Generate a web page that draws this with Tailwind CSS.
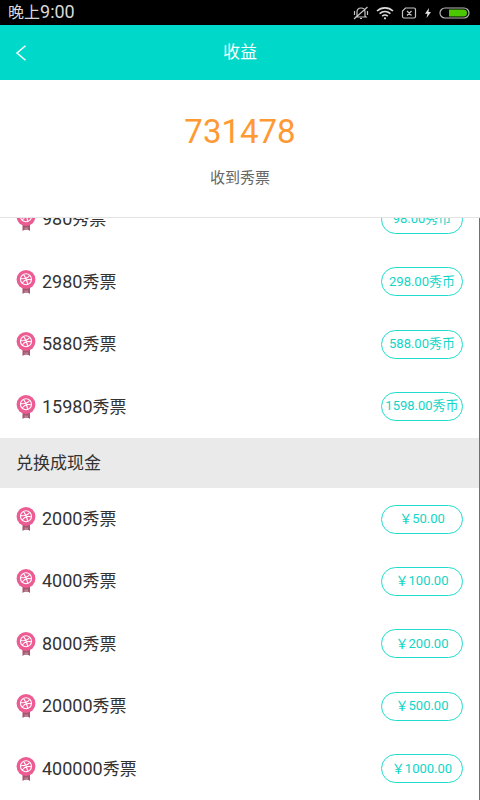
<!DOCTYPE html>
<html lang="zh-CN">
<head>
<meta charset="utf-8">
<meta name="viewport" content="width=device-width, initial-scale=1">
<title>收益</title>
<script src="https://cdn.jsdelivr.net/npm/@tailwindcss/browser@4"></script>
</head>
<body class="flex h-screen flex-col overflow-hidden bg-white font-[Roboto,'Noto_Sans_CJK_SC',sans-serif] text-lg text-[#333333]">
<svg class="hidden" aria-hidden="true">
  <symbol id="badge" viewBox="0 0 20 24">
    <path d="M6.500 16h7.500v8l-1.500-1h-4.500l-1.500 1z" fill="#a65770"/>
    <path d="M8.500 20.500h3.500v2.500h-3.500z" fill="#b98593"/>
    <circle cx="10" cy="9.500" r="9.400" fill="#ec5c93"/>
    <g fill="none" stroke="#fff" stroke-width="1.100">
      <circle cx="10" cy="9.300" r="5.500"/>
      <path d="M7.500 4.400c2.500 3 3.700 6.300 4.300 10M4.600 8.800c4 .2 7.300-.8 9.300-3.600M6.200 13.400c1.800-3.500 5.100-4.500 9.200-3.600"/>
    </g>
  </symbol>
</svg>

<div class="flex h-[25px] shrink-0 items-center justify-between bg-black pr-[10px] pl-2 leading-6 text-[#d8d8d8]">
  <span><span class="text-base">晚上</span>9:00</span>
  <div class="flex items-center gap-[7px]">
    <svg class="h-[14px] w-4" viewBox="0 0 16 14" fill="none" stroke="#c4c4c4" stroke-width="1.200">
      <path d="M4 10V6c0-2.500 1.500-4 4-4s4 1.500 4 4v4l1 1H3zM7 12.500h2M1 13 14.500 1M1.500 5v4M14.500 5v4"/>
    </svg>
    <svg class="h-[14px] w-[18px]" viewBox="0 0 18 14" fill="none" stroke="#dedede" stroke-width="1.600">
      <path d="M1 5c4.600-4.200 11.400-4.200 16 0M3.600 7.700c3.200-2.800 7.600-2.800 10.800 0M6.200 10.200c1.700-1.400 3.900-1.400 5.600 0"/><circle cx="9" cy="12.300" r="1.100" fill="#dedede" stroke="none"/>
    </svg>
    <svg class="h-[14px] w-4" viewBox="0 0 16 14" fill="none" stroke="#c4c4c4" stroke-width="1.200">
      <path d="M4.500 2H13c1 0 1.500.5 1.500 1.500v7c0 1-.5 1.500-1.500 1.500H3c-1 0-1.500-.5-1.500-1.500V5zM6 5l4.500 4.500M10.500 5 6 9.500"/>
    </svg>
    <svg class="h-[14px] w-2" viewBox="0 0 8 14" fill="#e4e4e4"><path d="M5 2 1 7.800h2.500L2.500 12 7 6H4.500z"/></svg>
    <svg class="h-[14px] w-[31px]" viewBox="0 0 31 14"><rect x="1" y="2" width="29" height="10" rx="5" fill="none" stroke="#b8b8b8" stroke-width="1.200"/><path d="M10 3.500h14.500a3.500 3.500 0 0 1 0 7H10z" fill="#4cc800"/></svg>
  </div>
</div>

<header class="grid h-[55px] shrink-0 grid-cols-[1fr_auto_1fr] items-center bg-[#00d9c9] px-[11px] text-white">
  <button type="button" aria-label="返回" class="flex size-5 items-center justify-center">
    <svg class="h-4 w-3" viewBox="0 0 12 16" fill="none" stroke="#fff" stroke-width="1.500"><path d="M10.500.8 2 8l8.500 7.200"/></svg>
  </button>
  <h1 class="text-[17px]">收益</h1>
</header>

<section class="flex h-[138px] shrink-0 flex-col items-center border-b border-[#e4e4e4] pt-8 text-center">
  <p class="text-[33px] leading-10 text-[#ff9933]">731478</p>
  <h2 class="mt-4 text-[15px] leading-5 text-[#666666]">收到秀票</h2>
</section>

<main class="flex min-h-0 flex-1 flex-col overflow-hidden border-r border-[#707070]">
  <ul class="-mt-[30px] flex flex-[4_0_auto] flex-col">
    <li class="flex min-h-[62px] flex-1 items-center pr-4 pl-4"><svg class="h-6 w-5" aria-hidden="true"><use href="#badge"/></svg><span class="ml-[6px] flex-1">980<span class="text-[17px]">秀票</span></span><button type="button" class="h-[29px] w-[82px] rounded-full border border-[#1fdccd] text-[13px] whitespace-nowrap text-[#10d6c7]">98.00秀币</button></li>
    <li class="flex min-h-[62px] flex-1 items-center pr-4 pl-4"><svg class="h-6 w-5" aria-hidden="true"><use href="#badge"/></svg><span class="ml-[6px] flex-1">2980<span class="text-[17px]">秀票</span></span><button type="button" class="h-[29px] w-[82px] rounded-full border border-[#1fdccd] text-[13px] whitespace-nowrap text-[#10d6c7]">298.00秀币</button></li>
    <li class="flex min-h-[62px] flex-1 items-center pr-4 pl-4"><svg class="h-6 w-5" aria-hidden="true"><use href="#badge"/></svg><span class="ml-[6px] flex-1">5880<span class="text-[17px]">秀票</span></span><button type="button" class="h-[29px] w-[82px] rounded-full border border-[#1fdccd] text-[13px] whitespace-nowrap text-[#10d6c7]">588.00秀币</button></li>
    <li class="flex min-h-[62px] flex-1 items-center pr-4 pl-4"><svg class="h-6 w-5" aria-hidden="true"><use href="#badge"/></svg><span class="ml-[6px] flex-1">15980<span class="text-[17px]">秀票</span></span><button type="button" class="h-[29px] w-[82px] rounded-full border border-[#1fdccd] text-[13px] whitespace-nowrap text-[#10d6c7]">1598.00秀币</button></li>
  </ul>
  <h2 class="flex h-[50px] shrink-0 items-center bg-[#eaeaea] px-4 text-[17px]">兑换成现金</h2>
  <ul class="flex flex-[5_0_auto] flex-col">
    <li class="flex min-h-[62px] flex-1 items-center pr-4 pl-4"><svg class="h-6 w-5" aria-hidden="true"><use href="#badge"/></svg><span class="ml-[6px] flex-1">2000<span class="text-[17px]">秀票</span></span><button type="button" class="h-[29px] w-[82px] rounded-full border border-[#1fdccd] text-[13px] whitespace-nowrap text-[#10d6c7]">￥50.00</button></li>
    <li class="flex min-h-[62px] flex-1 items-center pr-4 pl-4"><svg class="h-6 w-5" aria-hidden="true"><use href="#badge"/></svg><span class="ml-[6px] flex-1">4000<span class="text-[17px]">秀票</span></span><button type="button" class="h-[29px] w-[82px] rounded-full border border-[#1fdccd] text-[13px] whitespace-nowrap text-[#10d6c7]">￥100.00</button></li>
    <li class="flex min-h-[62px] flex-1 items-center pr-4 pl-4"><svg class="h-6 w-5" aria-hidden="true"><use href="#badge"/></svg><span class="ml-[6px] flex-1">8000<span class="text-[17px]">秀票</span></span><button type="button" class="h-[29px] w-[82px] rounded-full border border-[#1fdccd] text-[13px] whitespace-nowrap text-[#10d6c7]">￥200.00</button></li>
    <li class="flex min-h-[62px] flex-1 items-center pr-4 pl-4"><svg class="h-6 w-5" aria-hidden="true"><use href="#badge"/></svg><span class="ml-[6px] flex-1">20000<span class="text-[17px]">秀票</span></span><button type="button" class="h-[29px] w-[82px] rounded-full border border-[#1fdccd] text-[13px] whitespace-nowrap text-[#10d6c7]">￥500.00</button></li>
    <li class="flex min-h-[62px] flex-1 items-center pr-4 pl-4"><svg class="h-6 w-5" aria-hidden="true"><use href="#badge"/></svg><span class="ml-[6px] flex-1">400000<span class="text-[17px]">秀票</span></span><button type="button" class="h-[29px] w-[82px] rounded-full border border-[#1fdccd] text-[13px] whitespace-nowrap text-[#10d6c7]">￥1000.00</button></li>
  </ul>
</main>
</body>
</html>
